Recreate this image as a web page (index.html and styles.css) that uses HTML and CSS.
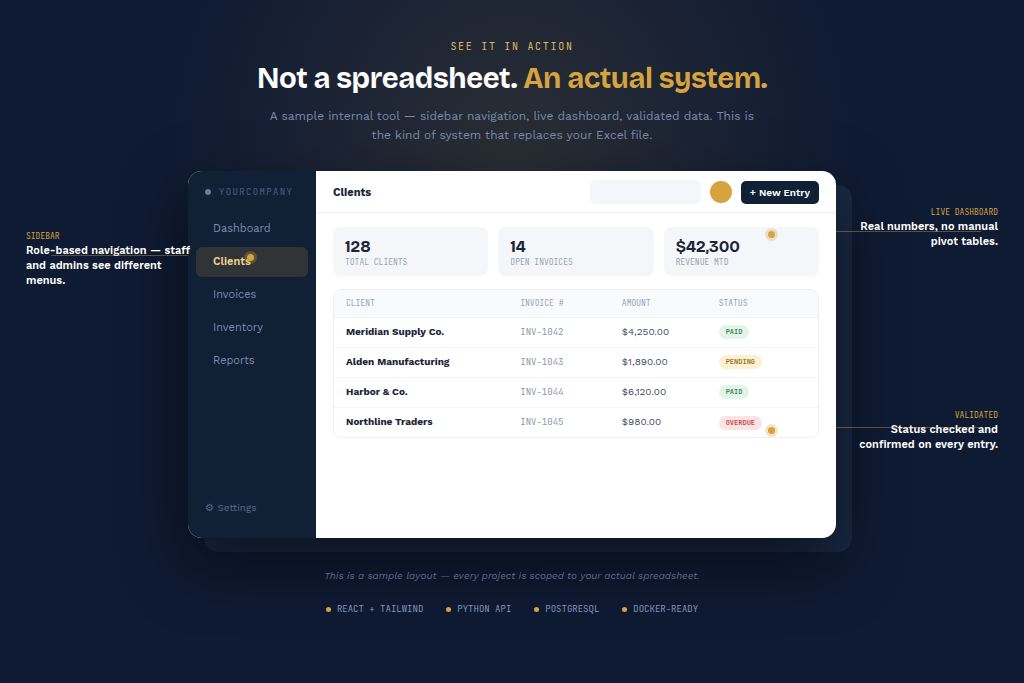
FILE: index.html
```html
<!DOCTYPE html>
<html lang="en">
<head>
    <meta charset="UTF-8">
    <meta name="viewport" content="width=device-width, initial-scale=1.0">
    <title>See it in action</title>
    <link rel="stylesheet" href="styles.css">
</head>
<body>
    <section class="showcase">
        <header class="intro">
            <p class="eyebrow">See it in action</p>
            <h2>Not a spreadsheet. <span>An actual system.</span></h2>
            <p class="lead">A sample internal tool — sidebar navigation, live dashboard, validated data. This is the kind of system that replaces your Excel file.</p>
        </header>

        <div class="stage">
            <div class="notes notes-left">
                <div class="note">
                    <span class="note-label">Sidebar</span>
                    <p>Role-based navigation — staff and admins see different menus.</p>
                </div>
            </div>

            <div class="window-wrap">
                <div class="window">
                    <aside class="sidebar">
                        <div class="brand"><span class="brand-dot"></span>YOURCOMPANY</div>
                        <nav class="menu">
                            <a href="#dashboard">Dashboard</a>
                            <a href="#clients" class="active">Clients</a>
                            <a href="#invoices">Invoices</a>
                            <a href="#inventory">Inventory</a>
                            <a href="#reports">Reports</a>
                        </nav>
                        <a href="#settings" class="settings">⚙ Settings</a>
                    </aside>

                    <div class="main">
                        <div class="topbar">
                            <h3>Clients</h3>
                            <input type="search" class="search" aria-label="Search clients">
                            <span class="avatar"></span>
                            <button type="button" class="new-entry">+ New Entry</button>
                        </div>

                        <div class="content">
                            <div class="stats">
                                <div class="stat"><strong>128</strong><span>Total clients</span></div>
                                <div class="stat"><strong>14</strong><span>Open invoices</span></div>
                                <div class="stat"><strong>$42,300</strong><span>Revenue MTD</span></div>
                            </div>

                            <div class="table-card">
                                <table>
                                    <thead>
                                        <tr>
                                            <th class="col-client">Client</th>
                                            <th class="col-invoice">Invoice #</th>
                                            <th class="col-amount">Amount</th>
                                            <th>Status</th>
                                        </tr>
                                    </thead>
                                    <tbody>
                                        <tr>
                                            <td class="client">Meridian Supply Co.</td>
                                            <td class="invoice">INV-1042</td>
                                            <td>$4,250.00</td>
                                            <td><span class="badge paid">Paid</span></td>
                                        </tr>
                                        <tr>
                                            <td class="client">Alden Manufacturing</td>
                                            <td class="invoice">INV-1043</td>
                                            <td>$1,890.00</td>
                                            <td><span class="badge pending">Pending</span></td>
                                        </tr>
                                        <tr>
                                            <td class="client">Harbor &amp; Co.</td>
                                            <td class="invoice">INV-1044</td>
                                            <td>$6,120.00</td>
                                            <td><span class="badge paid">Paid</span></td>
                                        </tr>
                                        <tr>
                                            <td class="client">Northline Traders</td>
                                            <td class="invoice">INV-1045</td>
                                            <td>$980.00</td>
                                            <td><span class="badge overdue">Overdue</span></td>
                                        </tr>
                                    </tbody>
                                </table>
                            </div>
                        </div>
                    </div>
                </div>
                <span class="pin pin-sidebar"></span>
                <span class="pin pin-stats"></span>
                <span class="pin pin-status"></span>
            </div>

            <div class="notes notes-right">
                <div class="note">
                    <span class="note-label">Live dashboard</span>
                    <p>Real numbers, no manual pivot tables.</p>
                </div>
                <div class="note">
                    <span class="note-label">Validated</span>
                    <p>Status checked and confirmed on every entry.</p>
                </div>
            </div>
        </div>

        <p class="caption">This is a sample layout — every project is scoped to your actual spreadsheet.</p>
        <ul class="stack">
            <li>React + Tailwind</li>
            <li>Python API</li>
            <li>PostgreSQL</li>
            <li>Docker-ready</li>
        </ul>
    </section>
</body>
</html>
```
FILE: styles.css
```css
:root {
    --navy: #0f1b33;
    --panel: #122036;
    --gold: #d6a33e;
    --slate: #7b8bad;
    --display: "Bricolage Grotesque", "Work Sans", Inter, sans-serif;
    --sans: "Work Sans", Inter, "Liberation Sans", sans-serif;
    --mono: "JetBrains Mono", "Liberation Mono", monospace;
}
* {
    margin: 0;
    padding: 0;
    box-sizing: border-box;
}
body {
    font-family: var(--sans);
    background: var(--navy);
    color: #fff;
}
a {
    text-decoration: none;
}
.showcase {
    min-height: 100vh;
    padding: 41px 26px;
    overflow: hidden;
    background: radial-gradient(ellipse 340px 400px at 50% 170px, rgba(214, 163, 62, 0.14), rgba(214, 163, 62, 0.07) 50%, transparent);
}

/* Intro */
.intro {
    text-align: center;
}
.eyebrow {
    font-family: var(--mono);
    font-size: 10px;
    line-height: 12px;
    letter-spacing: 0.17em;
    text-transform: uppercase;
    color: #d9b863;
}
.intro h2 {
    margin-top: 8px;
    font-family: var(--display);
    font-size: 29px;
    line-height: 36px;
    font-weight: 700;
    letter-spacing: -0.015em;
}
.intro h2 span {
    color: var(--gold);
}
.lead {
    max-width: 500px;
    margin: 10px auto 0;
    font-size: 12px;
    line-height: 19px;
    color: var(--slate);
}

/* Stage */
.stage {
    display: grid;
    grid-template-columns: minmax(0, 1fr) minmax(0, 648px) minmax(0, 1fr);
    margin-top: 26px;
}
.notes-left {
    padding-top: 60px;
}
.notes-left .note {
    width: 166px;
}
.notes-right {
    display: flex;
    flex-direction: column;
    gap: 161px;
    padding: 36px 0 0 20px;
    text-align: right;
}
.note {
    position: relative;
    z-index: 1;
}
.note::before {
    content: "";
    position: absolute;
    top: 24px;
    left: -20px;
    right: 17px;
    height: 1px;
    background: rgba(214, 163, 62, 0.4);
}
.notes-left .note::before {
    left: 25px;
    right: 4px;
}
.note:last-child:not(:first-child)::before {
    top: 17px;
}
.note-label {
    display: block;
    font-family: var(--mono);
    font-size: 8px;
    line-height: 10px;
    text-transform: uppercase;
    color: var(--gold);
}
.note p {
    margin-top: 2px;
    font-size: 11px;
    line-height: 15px;
    font-weight: 600;
}

/* App window */
.window-wrap {
    position: relative;
}
.window-wrap::before {
    content: "";
    position: absolute;
    inset: 14px -16px -14px 16px;
    border-radius: 14px;
    background: #1a2944;
}
.window {
    position: relative;
    display: flex;
    min-height: 367px;
    border-radius: 14px;
    overflow: hidden;
    background: #fff;
    box-shadow: 0 24px 64px rgba(0, 0, 0, 0.55);
}
.sidebar {
    display: flex;
    flex-direction: column;
    flex: 0 0 128px;
    padding: 14px 8px 23px;
    background: var(--panel);
}
.brand {
    display: flex;
    align-items: center;
    gap: 8px;
    padding: 0 9px;
    font-family: var(--mono);
    font-size: 9px;
    line-height: 14px;
    letter-spacing: 0.15em;
    color: #4c5d80;
}
.brand-dot {
    flex: none;
    width: 6px;
    height: 6px;
    border-radius: 50%;
    background: #6b7a9b;
}
.menu {
    display: flex;
    flex-direction: column;
    gap: 3px;
    margin-top: 15px;
}
.menu a {
    padding: 0 17px;
    border-radius: 6px;
    font-size: 11px;
    line-height: 30px;
    color: var(--slate);
}
.menu a.active {
    background: #303436;
    color: #f0d391;
    font-weight: 600;
}
.settings {
    margin-top: auto;
    padding-left: 9px;
    font-size: 10px;
    line-height: 14px;
    color: #5b6b8c;
}
.main {
    flex: 1;
    min-width: 0;
    color: #1b2438;
}
.topbar {
    display: flex;
    align-items: center;
    gap: 9px;
    padding: 9px 17px 8px;
    border-bottom: 1px solid #f0f1f5;
}
.topbar h3 {
    flex: 1;
    font-size: 11px;
    font-weight: 700;
}
.search {
    width: 111px;
    height: 24px;
    border: 0;
    border-radius: 6px;
    background: #f4f6fa;
}
.avatar {
    width: 22px;
    height: 22px;
    border-radius: 50%;
    background: var(--gold);
}
.new-entry {
    height: 23px;
    padding: 0 9px;
    border: 0;
    border-radius: 5px;
    font-family: inherit;
    font-size: 10px;
    font-weight: 600;
    color: #fff;
    background: #122036;
}
.content {
    padding: 14px 17px;
}
.stats {
    display: grid;
    grid-template-columns: repeat(3, 1fr);
    gap: 10px;
}
.stat {
    display: flex;
    flex-direction: column;
    padding: 10px 12px 8px;
    border-radius: 8px;
    background: #f4f6fa;
}
.stat strong {
    font-family: var(--display);
    font-size: 16px;
    line-height: 20px;
}
.stat span,
th {
    font-family: var(--mono);
    font-size: 8px;
    line-height: 11px;
    font-weight: 400;
    text-transform: uppercase;
    color: #97a2b6;
}
.table-card {
    margin-top: 13px;
    border: 1px solid #eef0f5;
    border-radius: 8px;
    overflow: hidden;
}
table {
    width: 100%;
    table-layout: fixed;
    border-collapse: collapse;
    text-align: left;
}
th,
td {
    padding: 0 12px;
}
th {
    height: 27px;
    background: #f8fafc;
}
.col-client {
    width: 36%;
}
.col-invoice {
    width: 21%;
}
.col-amount {
    width: 20%;
}
td {
    height: 30px;
    border-top: 1px solid #f2f4f7;
    font-size: 10px;
    line-height: 14px;
    color: #3f4a60;
}
td.client {
    font-weight: 700;
    color: #1b2438;
}
td.invoice {
    font-family: var(--mono);
    font-size: 9px;
    color: #8d97aa;
}
.badge {
    display: inline-block;
    padding: 0 7px;
    border-radius: 7px;
    font-family: var(--mono);
    font-size: 7px;
    line-height: 14px;
    font-weight: 700;
    text-transform: uppercase;
    vertical-align: middle;
}
.paid {
    background: #e4f4ea;
    color: #3b8757;
}
.pending {
    background: #fdf0d3;
    color: #9a7426;
}
.overdue {
    background: #fce4e4;
    color: #c14a4a;
}

/* Pins over the window */
.pin {
    position: absolute;
    width: 7px;
    height: 7px;
    border-radius: 50%;
    background: var(--gold);
    box-shadow: 0 0 0 3px rgba(214, 163, 62, 0.28);
}
.pin-sidebar {
    top: 83px;
    left: 59px;
}
.pin-stats {
    top: 60px;
    right: 61px;
}
.pin-status {
    top: 256px;
    right: 61px;
}

/* Footer */
.caption {
    position: relative;
    margin-top: 31px;
    font-size: 10px;
    line-height: 14px;
    font-style: italic;
    text-align: center;
    color: #5b6b8c;
}
.stack {
    position: relative;
    display: flex;
    flex-wrap: wrap;
    justify-content: center;
    gap: 23px;
    margin-top: 20px;
    list-style: none;
}
.stack li {
    display: flex;
    align-items: center;
    gap: 6px;
    font-family: var(--mono);
    font-size: 9px;
    line-height: 12px;
    text-transform: uppercase;
    color: #8494b5;
}
.stack li::before {
    content: "";
    width: 5px;
    height: 5px;
    border-radius: 50%;
    background: var(--gold);
}
```
